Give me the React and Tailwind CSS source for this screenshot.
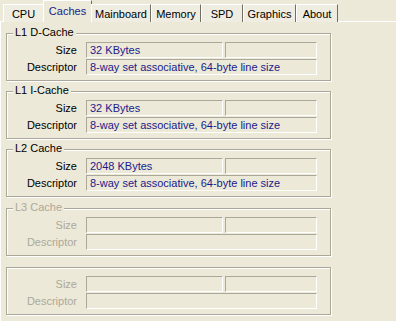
import React from "react";

const tabs = [
  { name: "CPU", w: "w-[41px]" },
  { name: "Caches", w: "w-[49px]", active: true },
  { name: "Mainboard", w: "w-[60px]" },
  { name: "Memory", w: "w-[50px]" },
  { name: "SPD", w: "w-[42px]" },
  { name: "Graphics", w: "w-[53px]" },
  { name: "About", w: "w-[42px]" },
];

const groups = [
  { title: "L1 D-Cache", size: "32 KBytes", desc: "8-way set associative, 64-byte line size", mt: "mt-[11px]" },
  { title: "L1 I-Cache", size: "32 KBytes", desc: "8-way set associative, 64-byte line size", mt: "mt-[10px]" },
  { title: "L2 Cache", size: "2048 KBytes", desc: "8-way set associative, 64-byte line size", mt: "mt-[10px]" },
  { title: "L3 Cache", disabled: true, mt: "mt-[11px]" },
  { title: "", disabled: true, mt: "mt-[11px]" },
];

function Field({ width, children }) {
  return (
    <div
      className={`${width} h-[16px] border border-t-[#aca899] border-l-[#aca899] border-b-white border-r-white pl-[3px] leading-[14px] text-[#1a1a8c] whitespace-nowrap overflow-hidden`}
    >
      {children}
    </div>
  );
}

function Row({ label, disabled, children }) {
  return (
    <div className="flex items-center">
      <div className={`w-[70px] text-right ${disabled ? "text-[#aca899]" : "text-black"}`}>{label}</div>
      <div className="ml-[9px] flex gap-[2px]">{children}</div>
    </div>
  );
}

function Group({ g }) {
  return (
    <div
      className={`relative ${g.mt} h-[48px] w-[325px] border border-[#aca899] shadow-[inset_1px_1px_0_#fff,1px_1px_0_#fff] pt-[8px]`}
    >
      {g.title ? (
        <span
          className={`absolute -top-[8px] left-[6px] bg-[#ECE9D8] px-[2px] leading-[13px] ${
            g.disabled ? "text-[#aca899]" : "text-black"
          }`}
        >
          {g.title}
        </span>
      ) : null}
      <div className="flex flex-col gap-[1px]">
        <Row label="Size" disabled={g.disabled}>
          <Field width="w-[137px]">{g.size}</Field>
          <Field width="w-[92px]" />
        </Row>
        <Row label="Descriptor" disabled={g.disabled}>
          <Field width="w-[231px]">{g.desc}</Field>
        </Row>
      </div>
    </div>
  );
}

export default function App() {
  return (
    <div
      className="w-[396px] h-[321px] overflow-hidden bg-[#ECE9D8] text-[11px] leading-[13px]"
      style={{ fontFamily: '"Liberation Sans", Arial, sans-serif' }}
    >
      <div className="relative z-10 flex h-[22px] items-end pl-[3px]">
        {tabs.map((t) =>
          t.active ? (
            <div
              key={t.name}
              className={`${t.w} -mx-[1px] h-[22px] border-l border-t border-r border-l-white border-t-white border-r-[#716f64] bg-[#ECE9D8] pt-[4px] text-center text-[#1a1a8c]`}
            >
              {t.name}
            </div>
          ) : (
            <div
              key={t.name}
              className={`${t.w} h-[18px] border-l border-t border-r border-l-white border-t-white border-r-[#716f64] bg-[#efede2] pt-[3px] text-center text-black`}
            >
              {t.name}
            </div>
          )
        )}
      </div>
      <div className="-mt-[1px] h-[400px] border-l border-t border-white pl-[5px]">
        {groups.map((g, i) => (
          <Group key={i} g={g} />
        ))}
      </div>
    </div>
  );
}
